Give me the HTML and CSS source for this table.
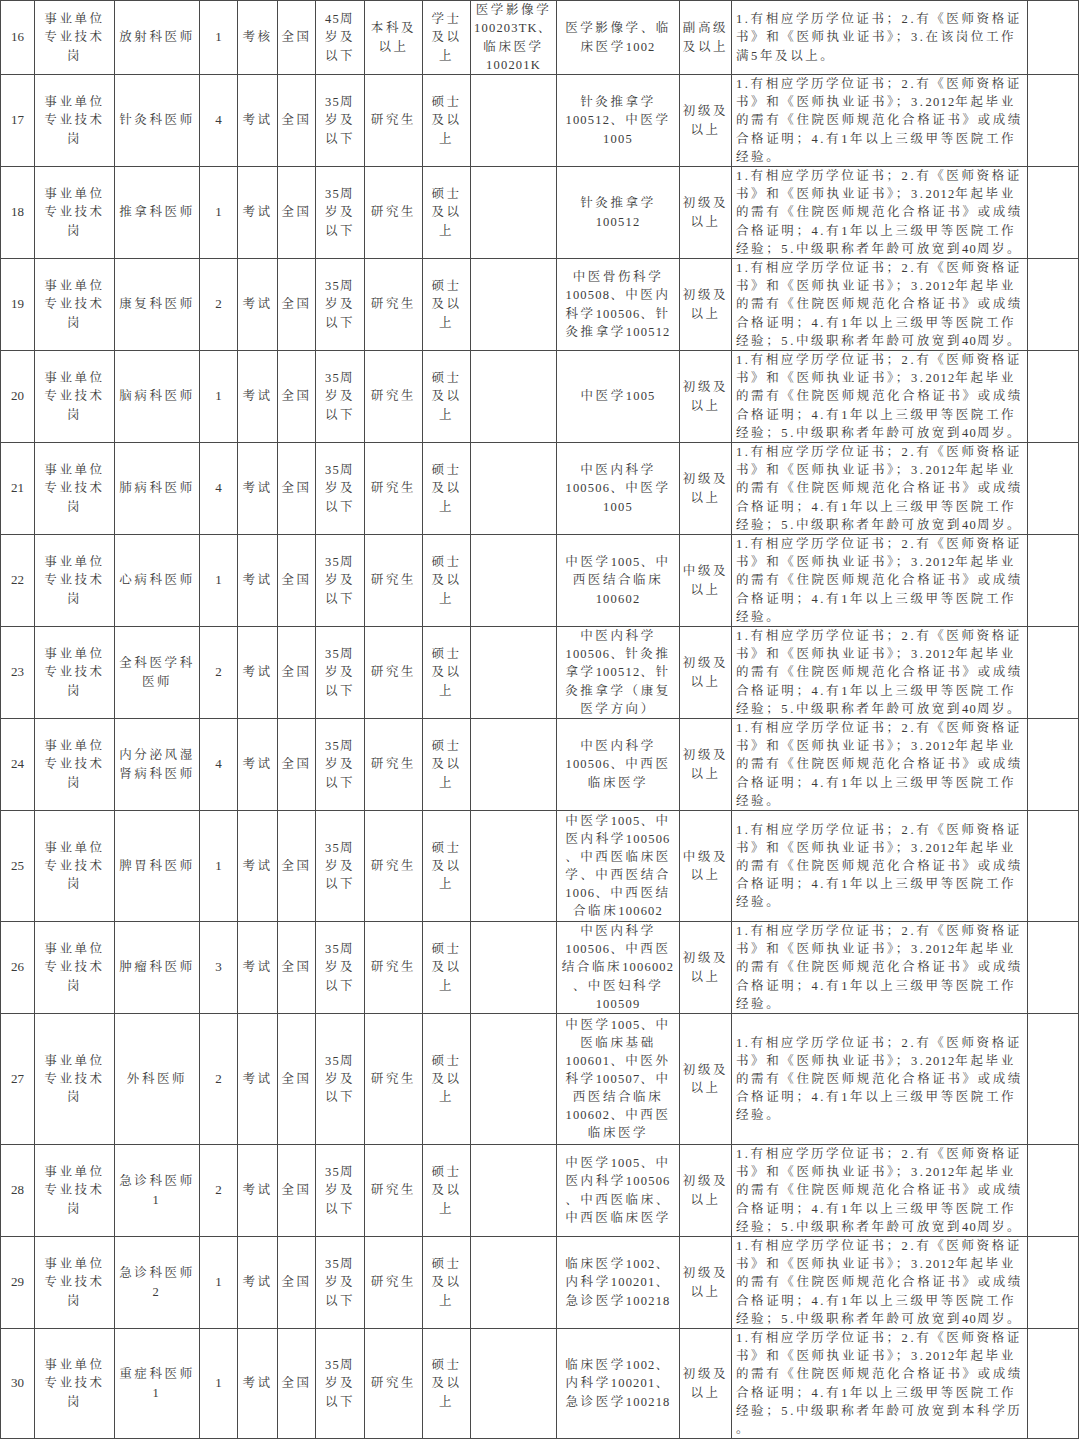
FILE: index.html
```html
<!DOCTYPE html>
<html lang="zh-CN">
<head>
<meta charset="utf-8">
<title>岗位表</title>
<link rel="stylesheet" href="styles.css">
</head>
<body>
<table class="grid">
<colgroup>
<col class="w34"><col class="w80"><col class="w85"><col class="w38"><col class="w40"><col class="w38"><col class="w49"><col class="w58"><col class="w48"><col class="w86"><col class="w123"><col class="w52"><col class="w296"><col class="w51">
</colgroup>
<tbody>
<tr class="r4">
<td class="num">16</td>
<td>事业单位<br>专业技术<br>岗</td>
<td>放射科医师</td>
<td class="num">1</td>
<td>考核</td>
<td>全国</td>
<td><span class="n">45</span>周<br>岁及<br>以下</td>
<td>本科及<br>以上</td>
<td>学士<br>及以<br>上</td>
<td>医学影像学<br><span class="n">100203TK</span>、<br>临床医学<br><span class="n">100201K</span></td>
<td>医学影像学、临<br>床医学<span class="n">1002</span></td>
<td>副高级<br>及以上</td>
<td class="c">1.有相应学历学位证书；2.有《医师资格证<br>书》和《医师执业证书》；3.在该岗位工作<br>满5年及以上。</td>
<td></td>
</tr>
<tr class="r5">
<td class="num">17</td>
<td>事业单位<br>专业技术<br>岗</td>
<td>针灸科医师</td>
<td class="num">4</td>
<td>考试</td>
<td>全国</td>
<td><span class="n">35</span>周<br>岁及<br>以下</td>
<td>研究生</td>
<td>硕士<br>及以<br>上</td>
<td></td>
<td>针灸推拿学<br><span class="n">100512</span>、中医学<br><span class="n">1005</span></td>
<td>初级及<br>以上</td>
<td class="c">1.有相应学历学位证书；2.有《医师资格证<br>书》和《医师执业证书》；3.<span class="n">2012</span>年起毕业<br>的需有《住院医师规范化合格证书》或成绩<br>合格证明；4.有1年以上三级甲等医院工作<br>经验。</td>
<td></td>
</tr>
<tr class="r5">
<td class="num">18</td>
<td>事业单位<br>专业技术<br>岗</td>
<td>推拿科医师</td>
<td class="num">1</td>
<td>考试</td>
<td>全国</td>
<td><span class="n">35</span>周<br>岁及<br>以下</td>
<td>研究生</td>
<td>硕士<br>及以<br>上</td>
<td></td>
<td>针灸推拿学<br><span class="n">100512</span></td>
<td>初级及<br>以上</td>
<td class="c">1.有相应学历学位证书；2.有《医师资格证<br>书》和《医师执业证书》；3.<span class="n">2012</span>年起毕业<br>的需有《住院医师规范化合格证书》或成绩<br>合格证明；4.有1年以上三级甲等医院工作<br>经验；5.中级职称者年龄可放宽到<span class="n">40</span>周岁。</td>
<td></td>
</tr>
<tr class="r5">
<td class="num">19</td>
<td>事业单位<br>专业技术<br>岗</td>
<td>康复科医师</td>
<td class="num">2</td>
<td>考试</td>
<td>全国</td>
<td><span class="n">35</span>周<br>岁及<br>以下</td>
<td>研究生</td>
<td>硕士<br>及以<br>上</td>
<td></td>
<td>中医骨伤科学<br><span class="n">100508</span>、中医内<br>科学<span class="n">100506</span>、针<br>灸推拿学<span class="n">100512</span></td>
<td>初级及<br>以上</td>
<td class="c">1.有相应学历学位证书；2.有《医师资格证<br>书》和《医师执业证书》；3.<span class="n">2012</span>年起毕业<br>的需有《住院医师规范化合格证书》或成绩<br>合格证明；4.有1年以上三级甲等医院工作<br>经验；5.中级职称者年龄可放宽到<span class="n">40</span>周岁。</td>
<td></td>
</tr>
<tr class="r5">
<td class="num">20</td>
<td>事业单位<br>专业技术<br>岗</td>
<td>脑病科医师</td>
<td class="num">1</td>
<td>考试</td>
<td>全国</td>
<td><span class="n">35</span>周<br>岁及<br>以下</td>
<td>研究生</td>
<td>硕士<br>及以<br>上</td>
<td></td>
<td>中医学<span class="n">1005</span></td>
<td>初级及<br>以上</td>
<td class="c">1.有相应学历学位证书；2.有《医师资格证<br>书》和《医师执业证书》；3.<span class="n">2012</span>年起毕业<br>的需有《住院医师规范化合格证书》或成绩<br>合格证明；4.有1年以上三级甲等医院工作<br>经验；5.中级职称者年龄可放宽到<span class="n">40</span>周岁。</td>
<td></td>
</tr>
<tr class="r5">
<td class="num">21</td>
<td>事业单位<br>专业技术<br>岗</td>
<td>肺病科医师</td>
<td class="num">4</td>
<td>考试</td>
<td>全国</td>
<td><span class="n">35</span>周<br>岁及<br>以下</td>
<td>研究生</td>
<td>硕士<br>及以<br>上</td>
<td></td>
<td>中医内科学<br><span class="n">100506</span>、中医学<br><span class="n">1005</span></td>
<td>初级及<br>以上</td>
<td class="c">1.有相应学历学位证书；2.有《医师资格证<br>书》和《医师执业证书》；3.<span class="n">2012</span>年起毕业<br>的需有《住院医师规范化合格证书》或成绩<br>合格证明；4.有1年以上三级甲等医院工作<br>经验；5.中级职称者年龄可放宽到<span class="n">40</span>周岁。</td>
<td></td>
</tr>
<tr class="r5">
<td class="num">22</td>
<td>事业单位<br>专业技术<br>岗</td>
<td>心病科医师</td>
<td class="num">1</td>
<td>考试</td>
<td>全国</td>
<td><span class="n">35</span>周<br>岁及<br>以下</td>
<td>研究生</td>
<td>硕士<br>及以<br>上</td>
<td></td>
<td>中医学<span class="n">1005</span>、中<br>西医结合临床<br><span class="n">100602</span></td>
<td>中级及<br>以上</td>
<td class="c">1.有相应学历学位证书；2.有《医师资格证<br>书》和《医师执业证书》；3.<span class="n">2012</span>年起毕业<br>的需有《住院医师规范化合格证书》或成绩<br>合格证明；4.有1年以上三级甲等医院工作<br>经验。</td>
<td></td>
</tr>
<tr class="r5">
<td class="num">23</td>
<td>事业单位<br>专业技术<br>岗</td>
<td>全科医学科<br>医师</td>
<td class="num">2</td>
<td>考试</td>
<td>全国</td>
<td><span class="n">35</span>周<br>岁及<br>以下</td>
<td>研究生</td>
<td>硕士<br>及以<br>上</td>
<td></td>
<td>中医内科学<br><span class="n">100506</span>、针灸推<br>拿学<span class="n">100512</span>、针<br>灸推拿学（康复<br>医学方向）</td>
<td>初级及<br>以上</td>
<td class="c">1.有相应学历学位证书；2.有《医师资格证<br>书》和《医师执业证书》；3.<span class="n">2012</span>年起毕业<br>的需有《住院医师规范化合格证书》或成绩<br>合格证明；4.有1年以上三级甲等医院工作<br>经验；5.中级职称者年龄可放宽到<span class="n">40</span>周岁。</td>
<td></td>
</tr>
<tr class="r5">
<td class="num">24</td>
<td>事业单位<br>专业技术<br>岗</td>
<td>内分泌风湿<br>肾病科医师</td>
<td class="num">4</td>
<td>考试</td>
<td>全国</td>
<td><span class="n">35</span>周<br>岁及<br>以下</td>
<td>研究生</td>
<td>硕士<br>及以<br>上</td>
<td></td>
<td>中医内科学<br><span class="n">100506</span>、中西医<br>临床医学</td>
<td>初级及<br>以上</td>
<td class="c">1.有相应学历学位证书；2.有《医师资格证<br>书》和《医师执业证书》；3.<span class="n">2012</span>年起毕业<br>的需有《住院医师规范化合格证书》或成绩<br>合格证明；4.有1年以上三级甲等医院工作<br>经验。</td>
<td></td>
</tr>
<tr class="r6">
<td class="num">25</td>
<td>事业单位<br>专业技术<br>岗</td>
<td>脾胃科医师</td>
<td class="num">1</td>
<td>考试</td>
<td>全国</td>
<td><span class="n">35</span>周<br>岁及<br>以下</td>
<td>研究生</td>
<td>硕士<br>及以<br>上</td>
<td></td>
<td>中医学<span class="n">1005</span>、中<br>医内科学<span class="n">100506</span><br>、中西医临床医<br>学、中西医结合<br><span class="n">1006</span>、中西医结<br>合临床<span class="n">100602</span></td>
<td>中级及<br>以上</td>
<td class="c">1.有相应学历学位证书；2.有《医师资格证<br>书》和《医师执业证书》；3.<span class="n">2012</span>年起毕业<br>的需有《住院医师规范化合格证书》或成绩<br>合格证明；4.有1年以上三级甲等医院工作<br>经验。</td>
<td></td>
</tr>
<tr class="r5">
<td class="num">26</td>
<td>事业单位<br>专业技术<br>岗</td>
<td>肿瘤科医师</td>
<td class="num">3</td>
<td>考试</td>
<td>全国</td>
<td><span class="n">35</span>周<br>岁及<br>以下</td>
<td>研究生</td>
<td>硕士<br>及以<br>上</td>
<td></td>
<td>中医内科学<br><span class="n">100506</span>、中西医<br>结合临床<span class="n">1006002</span><br>、中医妇科学<br><span class="n">100509</span></td>
<td>初级及<br>以上</td>
<td class="c">1.有相应学历学位证书；2.有《医师资格证<br>书》和《医师执业证书》；3.<span class="n">2012</span>年起毕业<br>的需有《住院医师规范化合格证书》或成绩<br>合格证明；4.有1年以上三级甲等医院工作<br>经验。</td>
<td></td>
</tr>
<tr class="r7">
<td class="num">27</td>
<td>事业单位<br>专业技术<br>岗</td>
<td>外科医师</td>
<td class="num">2</td>
<td>考试</td>
<td>全国</td>
<td><span class="n">35</span>周<br>岁及<br>以下</td>
<td>研究生</td>
<td>硕士<br>及以<br>上</td>
<td></td>
<td>中医学<span class="n">1005</span>、中<br>医临床基础<br><span class="n">100601</span>、中医外<br>科学<span class="n">100507</span>、中<br>西医结合临床<br><span class="n">100602</span>、中西医<br>临床医学</td>
<td>初级及<br>以上</td>
<td class="c">1.有相应学历学位证书；2.有《医师资格证<br>书》和《医师执业证书》；3.<span class="n">2012</span>年起毕业<br>的需有《住院医师规范化合格证书》或成绩<br>合格证明；4.有1年以上三级甲等医院工作<br>经验。</td>
<td></td>
</tr>
<tr class="r5">
<td class="num">28</td>
<td>事业单位<br>专业技术<br>岗</td>
<td>急诊科医师<br>1</td>
<td class="num">2</td>
<td>考试</td>
<td>全国</td>
<td><span class="n">35</span>周<br>岁及<br>以下</td>
<td>研究生</td>
<td>硕士<br>及以<br>上</td>
<td></td>
<td>中医学<span class="n">1005</span>、中<br>医内科学<span class="n">100506</span><br>、中西医临床、<br>中西医临床医学</td>
<td>初级及<br>以上</td>
<td class="c">1.有相应学历学位证书；2.有《医师资格证<br>书》和《医师执业证书》；3.<span class="n">2012</span>年起毕业<br>的需有《住院医师规范化合格证书》或成绩<br>合格证明；4.有1年以上三级甲等医院工作<br>经验；5.中级职称者年龄可放宽到<span class="n">40</span>周岁。</td>
<td></td>
</tr>
<tr class="r5">
<td class="num">29</td>
<td>事业单位<br>专业技术<br>岗</td>
<td>急诊科医师<br>2</td>
<td class="num">1</td>
<td>考试</td>
<td>全国</td>
<td><span class="n">35</span>周<br>岁及<br>以下</td>
<td>研究生</td>
<td>硕士<br>及以<br>上</td>
<td></td>
<td>临床医学<span class="n">1002</span>、<br>内科学<span class="n">100201</span>、<br>急诊医学<span class="n">100218</span></td>
<td>初级及<br>以上</td>
<td class="c">1.有相应学历学位证书；2.有《医师资格证<br>书》和《医师执业证书》；3.<span class="n">2012</span>年起毕业<br>的需有《住院医师规范化合格证书》或成绩<br>合格证明；4.有1年以上三级甲等医院工作<br>经验；5.中级职称者年龄可放宽到<span class="n">40</span>周岁。</td>
<td></td>
</tr>
<tr class="r6b">
<td class="num">30</td>
<td>事业单位<br>专业技术<br>岗</td>
<td>重症科医师<br>1</td>
<td class="num">1</td>
<td>考试</td>
<td>全国</td>
<td><span class="n">35</span>周<br>岁及<br>以下</td>
<td>研究生</td>
<td>硕士<br>及以<br>上</td>
<td></td>
<td>临床医学<span class="n">1002</span>、<br>内科学<span class="n">100201</span>、<br>急诊医学<span class="n">100218</span></td>
<td>初级及<br>以上</td>
<td class="c">1.有相应学历学位证书；2.有《医师资格证<br>书》和《医师执业证书》；3.<span class="n">2012</span>年起毕业<br>的需有《住院医师规范化合格证书》或成绩<br>合格证明；4.有1年以上三级甲等医院工作<br>经验；5.中级职称者年龄可放宽到本科学历<br>。</td>
<td></td>
</tr>
</tbody>
</table>
</body>
</html>
```

FILE: styles.css
```css
html, body {
  margin: 0;
  padding: 0;
  background: #ffffff;
}

.grid {
  border-collapse: collapse;
  table-layout: fixed;
  width: 1079px;
  font-family: "Liberation Serif", "Noto Serif CJK SC", "Noto Sans CJK SC", serif;
  font-size: 12.5px;
  line-height: 18.1px;
  color: #3a3a3a;
  letter-spacing: 2.6px;
}

.grid td {
  border: 1px solid #4a4a4a;
  padding: 0 1px;
  text-align: center;
  vertical-align: middle;
  white-space: nowrap;
  overflow: hidden;
}

.grid td.c {
  text-align: left;
  padding-left: 4px;
}

.grid td.num {
  letter-spacing: 0;
  font-size: 13px;
}

.n {
  letter-spacing: 1.2px;
}

.w34 { width: 34px; }
.w80 { width: 80px; }
.w85 { width: 85px; }
.w38 { width: 38px; }
.w40 { width: 40px; }
.w49 { width: 49px; }
.w58 { width: 58px; }
.w48 { width: 48px; }
.w86 { width: 86px; }
.w123 { width: 123px; }
.w52 { width: 52px; }
.w296 { width: 296px; }
.w51 { width: 51px; }

.r4 { height: 74px; }
.r5 { height: 92px; }
.r6 { height: 111px; }
.r6b { height: 110px; }
.r7 { height: 131px; }
```
